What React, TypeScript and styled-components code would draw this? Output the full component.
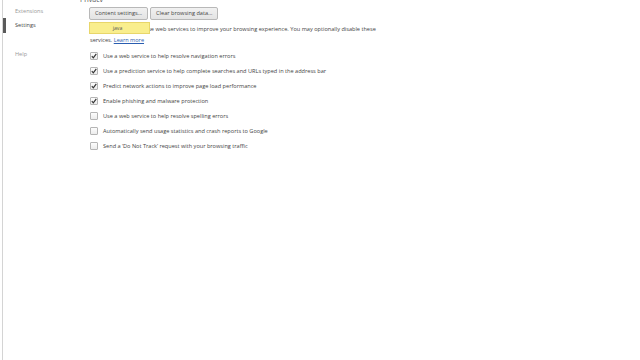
import React from "react";
import styled, { createGlobalStyle } from "styled-components";

const Global = createGlobalStyle`
  html, body { margin: 0; padding: 0; background: #fff; }
  body { font-family: "Open Sans", "Liberation Sans", sans-serif; color: #303942; }
  #root { height: 360px; }
`;

const Page = styled.div`
  display: flex;
  height: 360px;
  overflow: hidden;
`;

const Sidebar = styled.nav`
  width: 78px;
  flex-shrink: 0;
  margin-left: 2px;
  border-left: 1px solid #d4d4d4;
  display: flex;
  flex-direction: column;
  padding-top: 4px;
  box-sizing: border-box;
`;

const NavItem = styled.div<{ $active?: boolean; $gapTop?: number }>`
  position: relative;
  height: 14px;
  line-height: 14px;
  padding-left: 12px;
  margin-top: ${(p) => p.$gapTop ?? 0}px;
  font-size: 5.6px;
  color: ${(p) => (p.$active ? "#464646" : "#999")};
  &::before {
    content: "";
    display: ${(p) => (p.$active ? "block" : "none")};
    position: absolute;
    left: 0;
    top: 0;
    width: 3px;
    height: 15px;
    background: #5a5a5a;
  }
`;

const Main = styled.main`
  flex: 1;
  font-size: 5.6px;
`;

const SectionTitle = styled.div`
  height: 4px;
  line-height: 4px;
  font-size: 7px;
  color: #555;
  overflow: hidden;
  margin-top: -2px;
`;

const Section = styled.div`
  padding-left: 9px;
  padding-top: 5px;
`;

const Buttons = styled.div`
  display: flex;
  gap: 2px;
`;

const Button = styled.button`
  height: 13px;
  padding: 0 5px;
  font-family: inherit;
  font-size: 5.6px;
  color: #444;
  background: linear-gradient(#f1f1f1, #e3e3e3);
  border: 1px solid #b8b8b8;
  border-radius: 2px;
  line-height: 11px;
`;

const DescWrap = styled.div`
  position: relative;
  margin-top: 4px;
  padding-left: 1px;
`;

const Tooltip = styled.div`
  position: absolute;
  left: 0;
  top: -2px;
  width: 61px;
  height: 12px;
  background: #f9ee8d;
  border: 1px solid #e8d66a;
  box-sizing: border-box;
  font-size: 5.2px;
  color: #555;
  text-align: center;
  line-height: 10px;
  padding-right: 4px;
`;

const Desc = styled.p`
  margin: 0;
  width: 295px;
  line-height: 11px;
  color: #444;
`;

const Link = styled.a`
  color: #2a5db0;
  text-decoration: underline;
`;

const List = styled.div`
  margin-top: 2px;
  display: flex;
  flex-direction: column;
`;

const Row = styled.label`
  display: flex;
  align-items: center;
  height: 15px;
  gap: 5px;
  padding-left: 1px;
  color: #444;
`;

const Box = styled.span<{ $checked?: boolean }>`
  width: 6px;
  height: 6px;
  border: 1px solid #b5b5b5;
  border-radius: 1px;
  background: linear-gradient(#fdfdfd, #ececec);
  display: flex;
  align-items: center;
  justify-content: center;
  flex-shrink: 0;
`;

const Check = () => (
  <svg width="6" height="6" viewBox="0 0 6 6">
    <path d="M0.8 3.2 L2.3 4.8 L5.3 0.8" stroke="#333" strokeWidth="1.2" fill="none" />
  </svg>
);

const items: [string, boolean][] = [
  ["Use a web service to help resolve navigation errors", true],
  ["Use a prediction service to help complete searches and URLs typed in the address bar", true],
  ["Predict network actions to improve page load performance", true],
  ["Enable phishing and malware protection", true],
  ["Use a web service to help resolve spelling errors", false],
  ["Automatically send usage statistics and crash reports to Google", false],
  ["Send a \u2018Do Not Track\u2019 request with your browsing traffic", false],
];

export default function App() {
  return (
    <>
      <Global />
      <Page>
        <Sidebar>
          <NavItem>Extensions</NavItem>
          <NavItem $active>Settings</NavItem>
          <NavItem $gapTop={15}>Help</NavItem>
        </Sidebar>
        <Main>
          <SectionTitle>Privacy</SectionTitle>
          <Section>
            <Buttons>
              <Button>Content settings...</Button>
              <Button>Clear browsing data...</Button>
            </Buttons>
            <DescWrap>
              <Desc>
                Google Chrome may use web services to improve your browsing experience. You may optionally disable these services. <Link>Learn more</Link>
              </Desc>
              <Tooltip>java</Tooltip>
            </DescWrap>
            <List>
              {items.map(([t, c]) => (
                <Row key={t}>
                  <Box $checked={c}>{c && <Check />}</Box>
                  {t}
                </Row>
              ))}
            </List>
          </Section>
        </Main>
      </Page>
    </>
  );
}
